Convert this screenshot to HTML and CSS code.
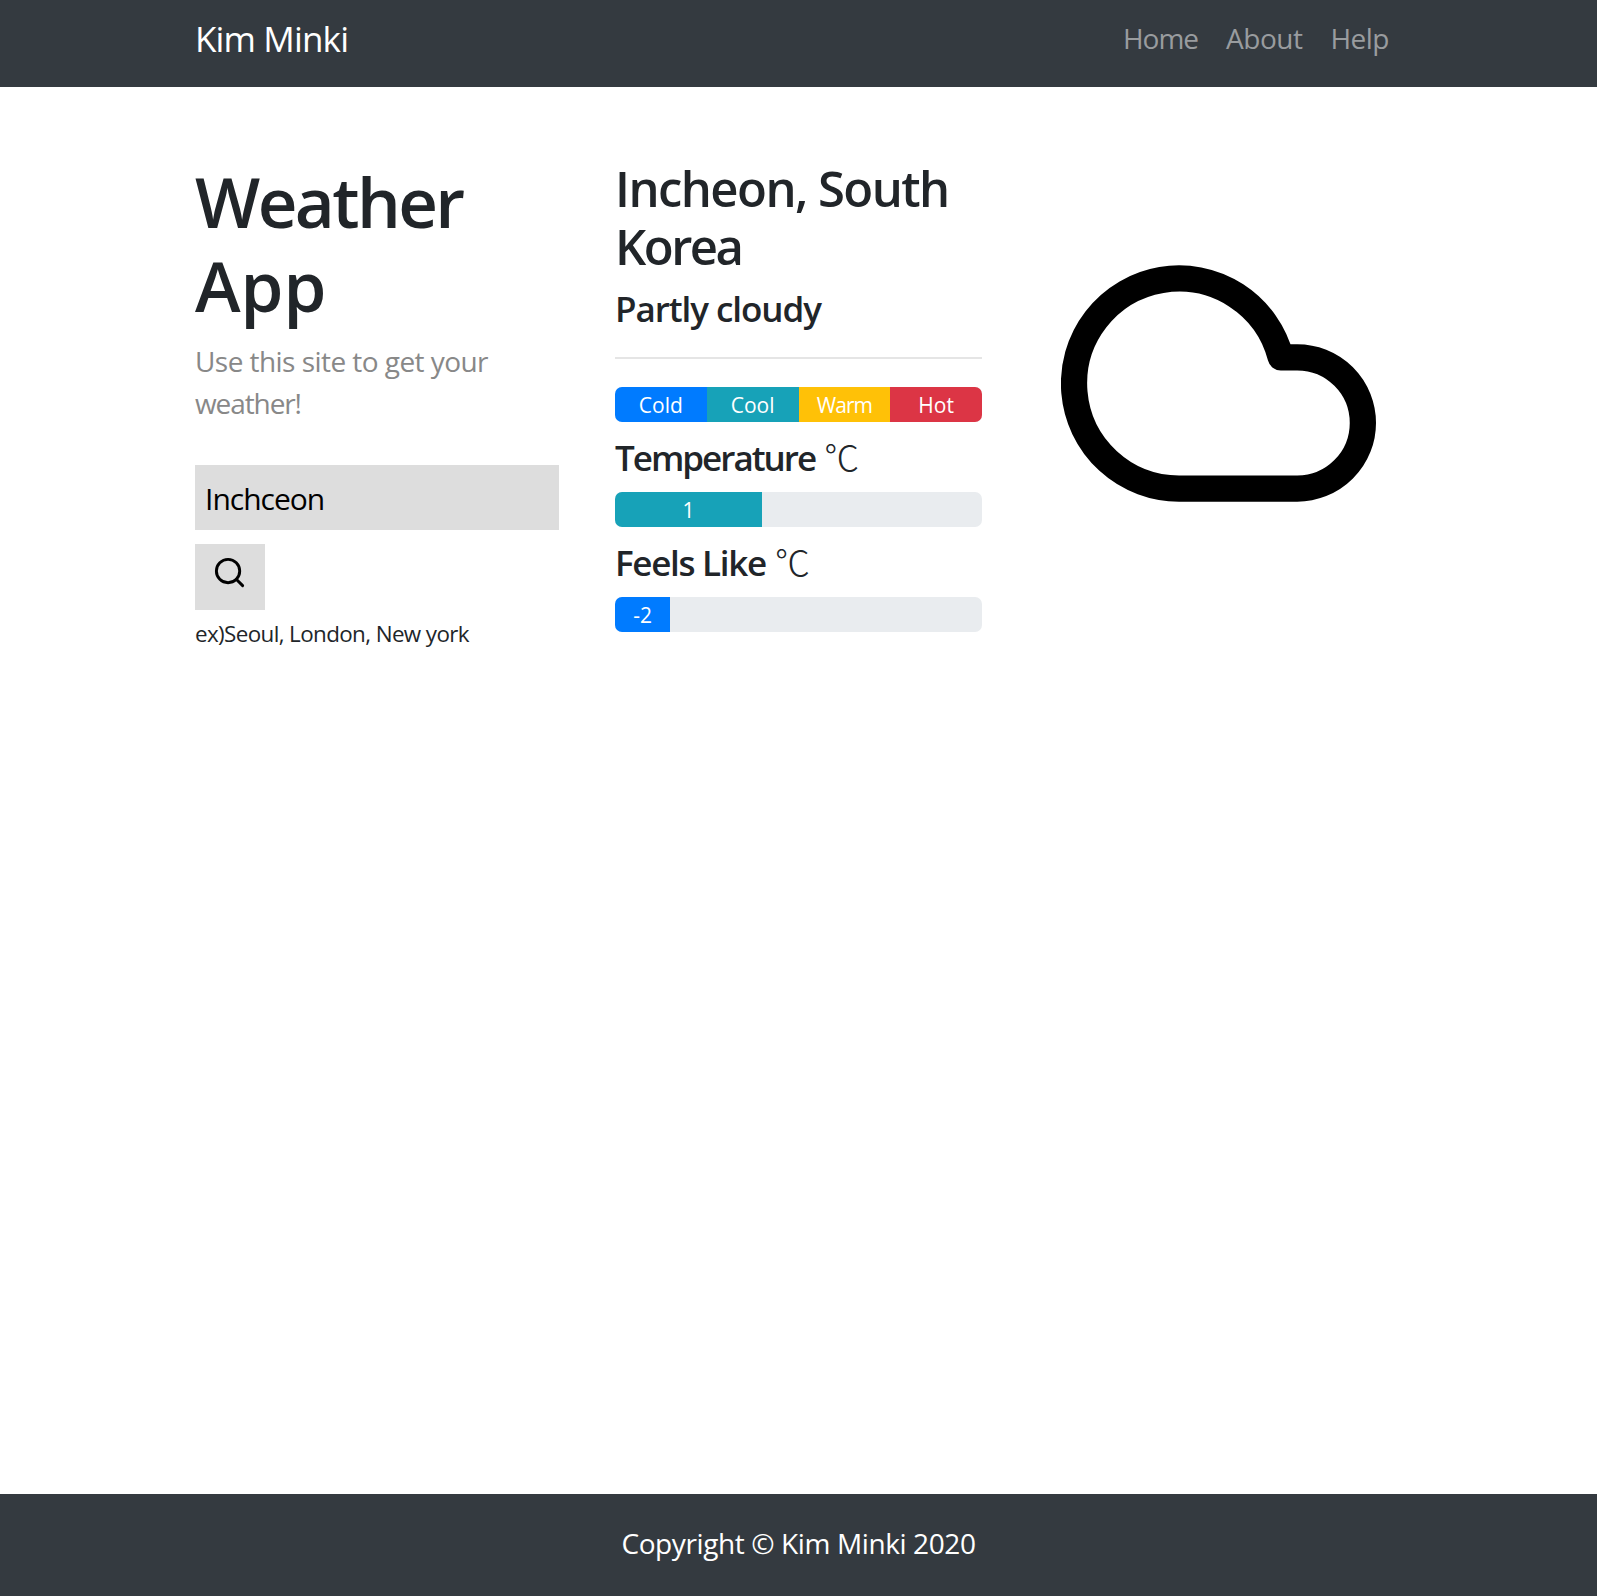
FILE: index.html
```html
<!DOCTYPE html>
<html lang="en">
<head>
<meta charset="utf-8">
<title>Weather App</title>
<link rel="stylesheet" href="styles.css">
</head>
<body>
<header class="navbar">
  <div class="container navbar-inner">
    <a class="brand">Kim Minki</a>
    <nav class="nav">
      <a class="nav-link home">Home</a>
      <a class="nav-link">About</a>
      <a class="nav-link">Help</a>
    </nav>
  </div>
</header>
<main class="container columns">
  <section class="search">
    <h1 class="title"><span class="title-first">Weather</span><br>App</h1>
    <p class="lead">Use this site to get your<br><span class="lead-last">weather!</span></p>
    <div class="field">Inchceon</div>
    <button class="search-button" aria-label="Search">
      <svg class="search-icon" viewBox="0 0 24 24"><circle cx="11" cy="11" r="8"/><path d="M21 21l-4.35-4.35"/></svg>
    </button>
    <p class="hint">ex)Seoul, London, New york</p>
  </section>
  <section class="report">
    <h2 class="city">Incheon, South<br><span class="city-last">Korea</span></h2>
    <h3 class="label condition">Partly cloudy</h3>
    <hr class="rule">
    <div class="progress legend">
      <div class="bar cold">Cold</div>
      <div class="bar cool">Cool</div>
      <div class="bar warm">Warm</div>
      <div class="bar hot">Hot</div>
    </div>
    <h3 class="label reading"><span class="temperature">Temperature</span> <span class="unit">℃</span></h3>
    <div class="progress"><div class="bar cool" style="width:40%">1</div></div>
    <h3 class="label reading"><span class="feels">Feels Like</span> <span class="unit">℃</span></h3>
    <div class="progress"><div class="bar cold" style="width:15%">-2</div></div>
  </section>
  <section class="picture">
    <svg class="cloud" viewBox="0 0 24 24"><path d="M18 10h-1.26A8 8 0 1 0 9 20h9a5 5 0 0 0 0-10z"/></svg>
  </section>
</main>
<footer class="footer">Copyright © Kim Minki 2020</footer>
</body>
</html>
```
FILE: styles.css
```css
* { box-sizing: border-box; margin: 0; padding: 0; }
body {
  display: flex;
  flex-direction: column;
  height: 1596px;
  overflow: hidden;
  background: #fff;
  color: #212529;
  font: 400 28px/42px "Open Sans", "Noto Sans CJK KR", sans-serif;
  white-space: nowrap;
}
.container { width: 1207px; margin: 0 auto; }
.navbar { height: 87px; background: #343a40; }
.navbar-inner { display: flex; justify-content: space-between; }
.brand { color: #fff; font-size: 35px; line-height: 78px; letter-spacing: -0.85px; }
.nav { display: flex; gap: 28px; padding-right: 13px; line-height: 77px; }
.nav-link { color: #999c9f; font-size: 28px; letter-spacing: -0.5px; }
.home { letter-spacing: -1px; }
.columns {
  display: grid;
  grid-template-columns: 364px 367px 367px;
  column-gap: 56px;
  padding-top: 72px;
}
.title { font-size: 69px; font-weight: 600; line-height: 84px; }
.title-first { letter-spacing: -2.6px; }
.lead { margin-top: 13px; color: #888; letter-spacing: -0.55px; }
.lead-last { letter-spacing: -1.1px; }
.field { height: 65px; margin-top: 41px; padding-left: 10px; background: #ddd; color: #000; font-size: 30px; line-height: 68px; letter-spacing: -1px; }
.search-button { display: block; width: 70px; height: 66px; margin-top: 14px; padding: 0 2px 6px 0; border: 0; background: #ddd; }
.search-icon, .cloud { fill: none; stroke: #000; stroke-width: 2; stroke-linecap: round; stroke-linejoin: round; }
.search-icon { width: 35px; height: 35px; }
.hint { font-size: 22.4px; line-height: 48px; letter-spacing: -0.61px; }
.city { font-size: 49px; font-weight: 600; line-height: 58px; letter-spacing: -1.55px; }
.city-last { letter-spacing: -2.5px; }
.label { height: 42px; font-size: 35px; font-weight: 600; line-height: 42px; }
.condition { margin-top: 13px; letter-spacing: -1.05px; }
.rule { height: 2px; margin: 27px 0 28px; border: 0; background: #e5e5e5; }
.progress { display: flex; height: 35px; border-radius: 7px; overflow: hidden; background: #e9ecef; }
.bar { color: #fff; font-size: 21px; line-height: 37px; text-align: center; }
.legend .bar { flex: 1; }
.cold { background: #007bff; }
.cool { background: #17a2b8; }
.warm { background: #ffc107; letter-spacing: -1px; }
.hot { background: #dc3545; }
.reading { margin: 15px 0 13px; }
.temperature { letter-spacing: -2px; }
.feels { letter-spacing: -1.3px; }
.unit { font-family: "Noto Sans CJK KR", sans-serif; font-weight: 300; line-height: 1; }
.picture { padding: 67px 0 0 23px; }
.cloud { display: block; width: 315px; height: 315px; }
.footer { height: 102px; margin-top: auto; background: #343a40; color: #fff; line-height: 99px; letter-spacing: -0.39px; text-align: center; }
```
